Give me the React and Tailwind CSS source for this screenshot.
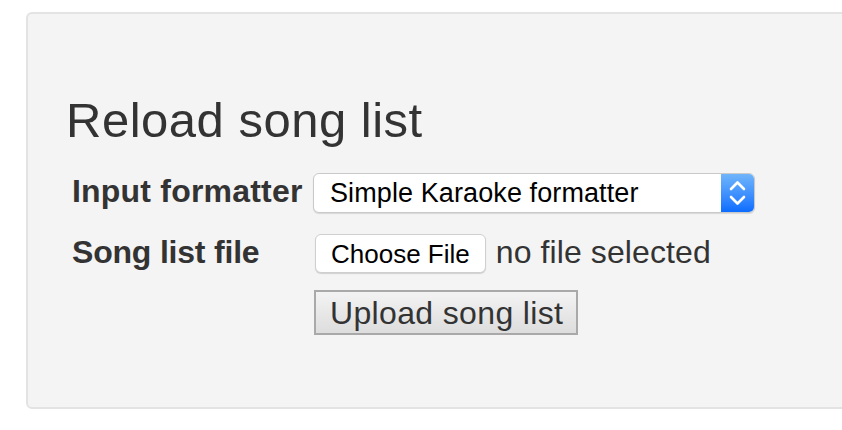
export default function App() {
  return (
    <div
      className="w-[842px] h-[430px] overflow-hidden bg-white pt-[12px] pl-[26px]"
      style={{ fontFamily: '"Liberation Sans", Arial, Helvetica, sans-serif' }}
    >
      <div className="w-[900px] h-[397px] border-2 border-[#e3e3e3] rounded-[6px] bg-[#f4f4f4] pt-[80px] pl-[35px]">
        <h2 className="pl-[3px] text-[49px] leading-[53px] tracking-[0.5px] text-[#333] font-normal">Reload song list</h2>

        <div className="mt-[26px] flex">
          <label className="w-[250px] pl-[9px] text-[32px] leading-[36px] tracking-[0.2px] font-bold text-[#333]">Input formatter</label>
          <div className="relative w-[442px] h-[40px] flex items-center bg-white border border-[#c9c9c9] rounded-[6px] shadow-[0_1px_1px_rgba(0,0,0,0.12)] overflow-hidden">
            <span className="pl-[16px] text-[27px] tracking-[0.1px] text-black">Simple Karaoke formatter</span>
            <div className="absolute right-0 top-0 bottom-0 w-[33px] bg-gradient-to-b from-[#6fb5fb] to-[#0a6cff] flex items-center justify-center">
              <svg width="33" height="40" viewBox="0 0 33 40" fill="none" stroke="white" strokeWidth="2.6" strokeLinecap="round" strokeLinejoin="round">
                <path d="M10 16 L16.5 9.5 L23 16" />
                <path d="M10 24 L16.5 30.5 L23 24" />
              </svg>
            </div>
          </div>
        </div>

        <div className="mt-[21px] flex">
          <label className="w-[250px] pl-[9px] text-[32px] leading-[36px] tracking-[-0.2px] font-bold text-[#333]">Song list file</label>
          <div className="flex items-start">
            <button className="ml-[2px] h-[39px] px-[15px] bg-white border border-[#cfcfcf] rounded-[6px] shadow-[0_1px_1px_rgba(0,0,0,0.15)] text-[26px] text-black leading-none">
              Choose File
            </button>
            <span className="ml-[10px] text-[32px] leading-[36px] tracking-[0.1px] text-[#333]">no file selected</span>
          </div>
        </div>

        <div className="mt-[17px] pl-[250px]">
          <button className="ml-[1px] h-[45px] w-[264px] pl-[14px] text-left border-2 border-[#a9a9a9] bg-gradient-to-b from-[#f3f3f3] to-[#dddddd] text-[32px] leading-none tracking-[0.35px] text-[#333]">
            Upload song list
          </button>
        </div>
      </div>
    </div>
  );
}
